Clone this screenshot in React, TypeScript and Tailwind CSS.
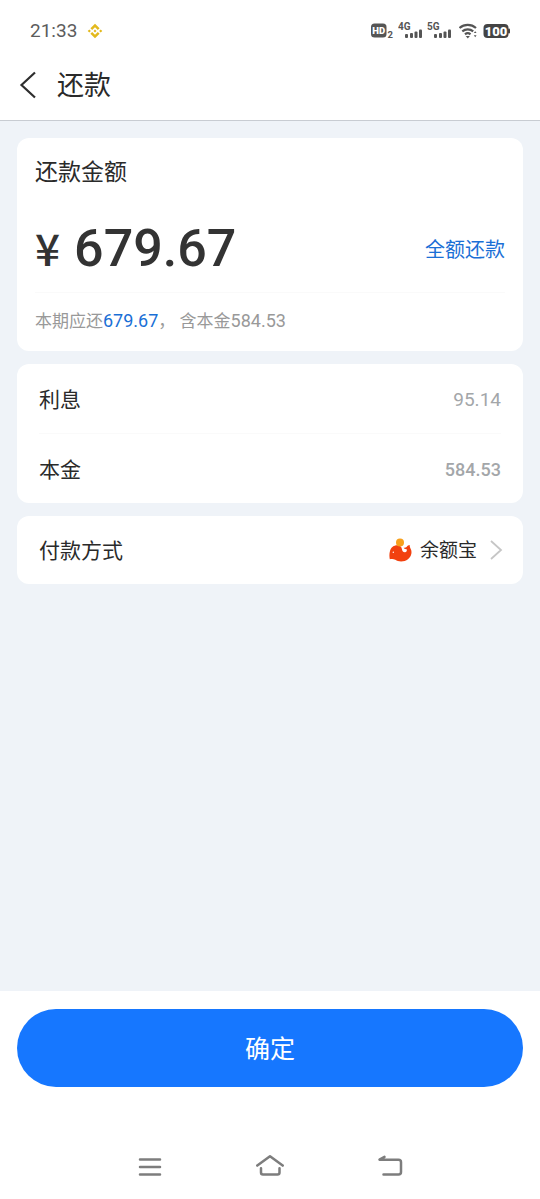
import type { ReactNode } from "react";

function BinanceIcon() {
  return (
    <svg viewBox="0 0 16 16" className="size-4" fill="#e3b91c" aria-hidden="true">
      <path d="M8 .8 12.600 5.200 10.800 7 8 4.200 5.200 7 3.400 5.200zM8 15.200 3.400 10.800 5.200 9 8 11.800 10.800 9 12.600 10.800zM2.300 6.400 3.900 8 2.300 9.600.7 8zM13.700 6.400 15.300 8 13.700 9.600 12.100 8zM8 6.500 9.500 8 8 9.500 6.500 8z" />
    </svg>
  );
}

function Signal({ label }: { label: string }) {
  return (
    <svg viewBox="0 -4 26 26" className="size-[26px]" fill="#555" aria-label={label}>
      <text x="0" y="8" fontSize="10" fontWeight="700" fontFamily="Roboto, sans-serif">
        {label}
      </text>
      <rect x="7" y="12" width="3" height="4" rx="1" />
      <rect x="12" y="11" width="3" height="5" rx="1" />
      <rect x="16.500" y="9.500" width="3" height="6.500" rx="1" />
      <rect x="21" y="7.500" width="3" height="8.500" rx="1" />
    </svg>
  );
}

function StatusBar() {
  return (
    <div className="flex h-[61px] items-center justify-between pr-[29px] pl-[30px] text-[#5c5c5c]">
      <div className="flex items-center gap-[10px]">
        <span className="text-[19px] leading-6">21:33</span>
        <BinanceIcon />
      </div>
      <div className="flex items-center gap-[3px]">
        <svg viewBox="0 -2 24 22" className="h-[22px] w-6" fill="#555" aria-label="HD 2">
          <rect x="0" y="1.500" width="15.500" height="14" rx="3.500" />
          <text x="7.700" y="12" textAnchor="middle" fontSize="9.500" fontWeight="900" fill="#fff" fontFamily="Roboto, sans-serif">
            HD
          </text>
          <text x="16.500" y="16" fontSize="9.500" fontWeight="700" fontFamily="Roboto, sans-serif">
            2
          </text>
        </svg>
        <Signal label="4G" />
        <Signal label="5G" />
        <span className="pl-[3px]">
          <svg viewBox="0 0 21 18" className="h-[18px] w-[21px]" fill="none" stroke="#555" strokeWidth="2.200" aria-label="Wi-Fi">
            <path d="M.5 6a12.500 12.500 0 0 1 16.500 0M3.300 9.300a8.400 8.400 0 0 1 10.900 0M6 12.300a4.300 4.300 0 0 1 5.500 0" />
            <path d="M6.700 13.900h4.200L8.800 16.500z" fill="#555" stroke="none" />
            <path d="M14.800 11h2.800L16.200 9.200zM14.800 13.300h2.800L16.200 15.200z" fill="#555" stroke="none" />
          </svg>
        </span>
        <svg viewBox="0 0 28 18" className="h-[18px] w-7" fill="#444" aria-label="100%">
          <rect x="0.500" y="2" width="25" height="14" rx="4" />
          <rect x="25" y="6.500" width="2" height="5" rx="1" />
          <text x="13" y="13.600" textAnchor="middle" fontSize="13" fontWeight="900" fill="#fff" fontFamily="Roboto, sans-serif">
            100
          </text>
        </svg>
      </div>
    </div>
  );
}

function Card({ children }: { children: ReactNode }) {
  return <section className="rounded-xl bg-white">{children}</section>;
}

function WhaleIcon() {
  return (
    <svg viewBox="0 0 24 24" className="size-6" aria-hidden="true">
      <path
        d="M1.800 21.300C1.300 18.600 1.200 15.800 2 13 3 9.200 6.300 7 9.800 7.300c2.400.2 3.700 1.600 4.100 3.600.4 2.200 1.500 3.500 3.100 3.300 1.500-.2 2.200-1.500 1.700-3-1.200.2-2.500-.2-3-1.400 1.500 0 2.300-.3 3.100-1.100.7-.7 1.600-1.500 2.900-1.600 0 1.400.2 2.200.8 3.300.9 1.500 1.200 3.100.9 5-.8 4.500-5 8-10.300 8-2.400 0-4.100-.6-5.800-1.700-1.700-.8-3.600-.9-5.500-.4z"
        fill="#f2410f"
      />
      <circle cx="12" cy="4.400" r="4" fill="#f8a01c" />
      <circle cx="5.300" cy="14.200" r="0.700" fill="#fff" />
    </svg>
  );
}

export default function App() {
  return (
    <div className="flex min-h-screen flex-col bg-white font-['Roboto','Noto_Sans_CJK_SC',sans-serif] font-normal text-[#2a2a2a]">
      <StatusBar />
      <header className="flex h-[60px] items-center gap-[20px] border-b border-[#c8ccd2] pb-[11px] pl-[19px]">
        <button type="button" aria-label="返回">
          <svg viewBox="0 0 18 28" className="h-7 w-[18px]" fill="none" stroke="#2e2e2e" strokeWidth="2.200">
            <path d="M16 1.500 2.500 14 16 26.500" />
          </svg>
        </button>
        <h1 className="pt-[2px] text-[27px] leading-9">还款</h1>
      </header>

      <main className="flex flex-1 flex-col gap-[13px] bg-[#eff3f8] px-[17px] pt-[17px] pb-6">
        <Card>
          <div className="px-[18px] pt-[18px]">
            <h2 className="text-[23px] leading-[34px]">还款金额</h2>
            <div className="flex h-[102px] items-center justify-between pt-[14px]">
              <p className="flex items-baseline gap-[14px] font-medium text-[#333]">
                <span className="font-['Noto_Sans_CJK_SC',sans-serif] text-[44px] leading-[60px]">¥</span>
                <span className="text-[52px] leading-[60px]">679.67</span>
              </p>
              <button type="button" className="pt-1 text-[20px] leading-7 text-[#1a6fd6]">
                全额还款
              </button>
            </div>
            <p className="border-t border-[#fafafa] pt-[16px] pb-[18px] text-[17px] leading-6 text-[#999]">
              本期应还<span className="text-[18px] text-[#1a6fd6]">679.67</span>，
              含本金<span className="text-[18px]">584.53</span>
            </p>
          </div>
        </Card>

        <Card>
          <dl className="px-[22px] leading-8">
            <div className="flex h-[70px] items-center justify-between border-b border-[#fafafa] pt-[2px]">
              <dt className="text-[21px]">利息</dt>
              <dd className="text-[19px] text-[#a3a6a9]">95.14</dd>
            </div>
            <div className="flex h-[69px] items-center justify-between pt-[2px]">
              <dt className="text-[21px]">本金</dt>
              <dd className="text-[18px] font-medium text-[#a3a6a9]">584.53</dd>
            </div>
          </dl>
        </Card>

        <Card>
          <button type="button" className="flex h-[68px] w-full items-center justify-between pr-[20px] pl-[22px]">
            <span className="pt-[2px] text-[21px] leading-8">付款方式</span>
            <span className="flex items-center text-[19px] leading-7">
              <WhaleIcon />
              <span className="pt-[2px] pr-3 pl-2">余额宝</span>
              <svg viewBox="0 0 14 20" className="h-5 w-[14px]" fill="none" stroke="#c6c6c6" strokeWidth="1.800" aria-hidden="true">
                <path d="M2 1 12 10 2 19" />
              </svg>
            </span>
          </button>
        </Card>
      </main>

      <footer className="bg-white">
        <div className="px-[17px] pt-[18px] pb-12">
          <button type="button" className="h-[78px] w-full rounded-full bg-[#1677ff] pt-1 text-[25px] text-white">
            确定
          </button>
        </div>
        <nav className="flex h-16 items-center justify-center gap-[92px]" aria-label="系统导航">
          <button type="button" aria-label="菜单">
            <svg viewBox="0 0 28 24" className="h-6 w-7" fill="none" stroke="#7d7d7d" strokeWidth="2.500" strokeLinecap="round">
              <path d="M4 4.500h20M4 12h20M4 19.500h20" />
            </svg>
          </button>
          <button type="button" aria-label="主页">
            <svg viewBox="0 0 28 24" className="h-6 w-7" fill="none" stroke="#7d7d7d" strokeWidth="2.500" strokeLinecap="round" strokeLinejoin="round">
              <path d="M1.300 10.600 14 1.300 26.700 10.600M5 13.200V17.500q0 2 2 2H21.500q2 0 2-2V13.200" />
            </svg>
          </button>
          <button type="button" aria-label="后退">
            <svg viewBox="0 0 28 24" className="h-6 w-7" fill="none" stroke="#7d7d7d" strokeWidth="2.500" strokeLinecap="round" strokeLinejoin="round">
              <path d="M8.500 1.800 3.500 4.700H22.500q2.500 0 2.500 2.500V17q0 2.500-2.500 2.500H7.500" />
            </svg>
          </button>
        </nav>
      </footer>
    </div>
  );
}
